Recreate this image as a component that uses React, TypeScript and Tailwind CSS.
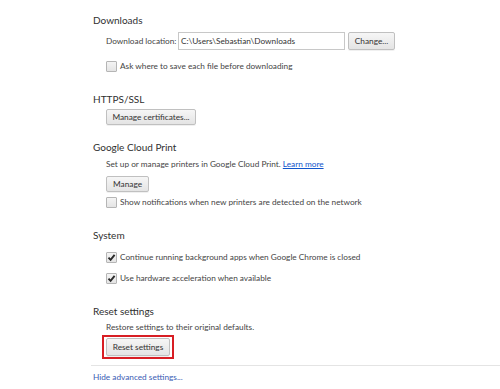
import React from "react";

function Btn({ children, className = "" }: { children: React.ReactNode; className?: string }) {
  return (
    <button
      className={`h-[16px] px-0 whitespace-nowrap text-[8.3px] leading-none text-[#333] border border-[#c0c0c0] rounded-[2px] bg-gradient-to-b from-[#f6f6f6] to-[#e4e4e4] shadow-[0_1px_0_rgba(0,0,0,0.06)] ${className}`}
    >
      {children}
    </button>
  );
}

function Check({ checked = false, label }: { checked?: boolean; label: string }) {
  return (
    <div className="flex items-center h-[14px] gap-[3px] whitespace-nowrap">
      <span className="w-[11px] h-[11px] border border-[#b5b5b5] rounded-[1px] bg-gradient-to-b from-[#f4f4f4] to-[#e4e4e4] flex items-center justify-center">
        {checked && (
          <svg width="9" height="9" viewBox="0 0 9 9">
            <path d="M1.5 4.6 L3.6 6.8 L7.6 1.8" fill="none" stroke="#2a2a2a" strokeWidth="1.9" />
          </svg>
        )}
      </span>
      <span>{label}</span>
    </div>
  );
}

function Heading({ children, className = "" }: { children: React.ReactNode; className?: string }) {
  return <div className={`h-[16px] leading-[16px] text-[10px] text-[#303030] ${className}`}>{children}</div>;
}

export default function App() {
  return (
    <div className="w-[500px] h-[389px] bg-white overflow-hidden pt-[12px] text-[8.25px] text-[#444] font-['Lato',sans-serif]">
      <div className="pl-[93px]">
        <Heading>Downloads</Heading>
        <div className="pl-[13px]">
          <div className="mt-[4px] flex items-center h-[18px] whitespace-nowrap">
            <span className="w-[72px]">Download location:</span>
            <div className="w-[167px] h-[18px] border border-[#c8c8c8] flex items-center px-[2px] text-[#333]">
              C:\Users\Sebastian\Downloads
            </div>
            <Btn className="ml-[3px] h-[18px] w-[47px]">Change...</Btn>
          </div>
          <div className="mt-[9px]">
            <Check label="Ask where to save each file before downloading" />
          </div>
        </div>

        <Heading className="mt-[18px]">HTTPS/SSL</Heading>
        <div className="pl-[13px] mt-[2px]">
          <Btn className="w-[90px]">Manage certificates...</Btn>
        </div>

        <Heading className="mt-[14px]">Google Cloud Print</Heading>
        <div className="pl-[13px]">
          <div className="mt-[2px] h-[14px] leading-[14px] whitespace-nowrap">
            Set up or manage printers in Google Cloud Print.{" "}
            <a className="text-[#1155cc] underline">Learn more</a>
          </div>
          <div className="mt-[5px]">
            <Btn className="w-[43px]">Manage</Btn>
          </div>
          <div className="mt-[3px]">
            <Check label="Show notifications when new printers are detected on the network" />
          </div>
        </div>

        <Heading className="mt-[18px]">System</Heading>
        <div className="pl-[13px]">
          <div className="mt-[7px]">
            <Check checked label="Continue running background apps when Google Chrome is closed" />
          </div>
          <div className="mt-[7px]">
            <Check checked label="Use hardware acceleration when available" />
          </div>
        </div>

        <Heading className="mt-[18px]">Reset settings</Heading>
        <div className="pl-[9px]">
          <div className="pl-[4px] mt-[1px] h-[14px] leading-[14px] whitespace-nowrap">Restore settings to their original defaults.</div>
          <div className="mt-[1px] inline-flex border-2 border-[#d81e24] px-[2px] py-[1px]">
            <Btn className="h-[18px] w-[64px]">Reset settings</Btn>
          </div>
        </div>
      </div>
      <div className="ml-[91px] mt-[6px] border-t border-[#e4e4e4]" />
      <div className="pl-[93px] mt-[4px] h-[14px] leading-[14px] text-[#3a5cb4] whitespace-nowrap">Hide advanced settings...</div>
    </div>
  );
}
